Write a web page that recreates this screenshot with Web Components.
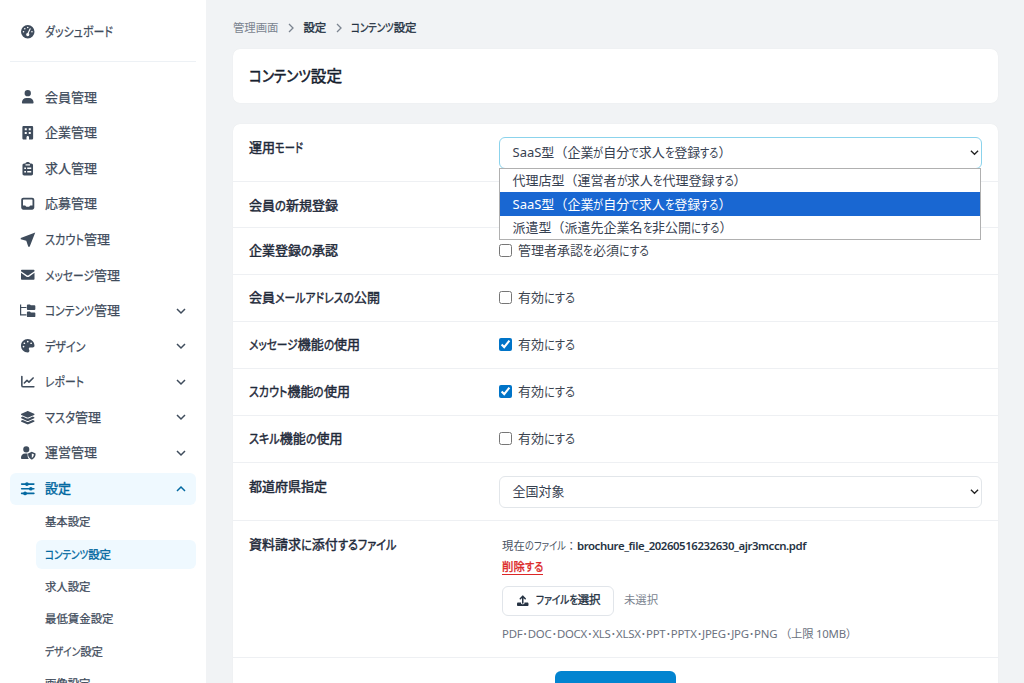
<!DOCTYPE html>
<html lang="ja">
<head>
<meta charset="utf-8">
<title>コンテンツ設定</title>
<style>
html, body { margin: 0; height: 100%; overflow: hidden; }
body {
  font-family: "Noto Sans", "Noto Sans CJK JP", sans-serif;
  font-size: 13px;
  color: #1f2937;
}
</style>
</head>
<body>
<admin-app></admin-app>

<script>
const icons = {
  gauge: '<path fill-rule="evenodd" d="M256 0a256 256 0 1 0 0 512 256 256 0 0 0 0-512zM256 64a30 30 0 1 1 0 60 30 30 0 0 1 0-60zM144 112a30 30 0 1 1 0 60 30 30 0 0 1 0-60zM96 226a30 30 0 1 1 0 60 30 30 0 0 1 0-60zM416 226a30 30 0 1 1 0 60 30 30 0 0 1 0-60zM354 122c14 6 20 20 14 34l-76 158c16 13 25 28 25 49a61 61 0 1 1-68-61l75-163c5-15 17-23 30-17z"/>',
  user: '<path d="M256 240A120 120 0 1 0 256 0a120 120 0 0 0 0 240zM205 304C110 304 35 375 35 472c0 23 14 40 36 40h370c22 0 36-17 36-40 0-97-75-168-170-168z"/>',
  building: '<path fill-rule="evenodd" d="M104 0C72 0 52 21 52 48v416c0 27 20 48 52 48h104v-86c0-26 20-48 48-48s48 22 48 48v86h104c32 0 52-21 52-48V48c0-27-20-48-52-48zM142 84h76v74h-76zM294 84h76v74h-76zM142 226h76v74h-76zM294 226h76v74h-76z"/>',
  clipboard: '<path fill-rule="evenodd" d="M256 0c-42 0-77 22-90 54h-46c-35 0-64 29-64 64v330c0 35 29 64 64 64h272c35 0 64-29 64-64V118c0-35-29-64-64-64h-46C333 22 298 0 256 0zM172 90h168v40H172zM124 210h66v60h-66zM236 210h152v60H236zM124 340h66v60h-66zM236 340h152v60H236z"/>',
  inbox: '<path fill-rule="evenodd" d="M88 32C44 32 8 68 8 112v288c0 44 36 80 80 80h336c44 0 80-36 80-80V112c0-44-36-80-80-80zM96 92h320c11 0 20 9 20 20v208h-74c-18 0-25 12-35 30-7 13-12 18-25 18h-92c-13 0-18-5-25-18-10-18-17-30-35-30H76V112c0-11 9-20 20-20z"/>',
  send: '<path d="M540-20-10 190v48l210 52 76 232h52z"/>',
  mail: '<path d="M30 64h452c18 0 30 12 30 30v26L286 278c-18 13-42 13-60 0L0 120V94c0-18 12-30 30-30zM0 182l196 138c36 27 84 27 120 0l196-138v236c0 18-12 30-30 30H30c-18 0-30-12-30-30z"/>',
  tree: '<path d="M-38 16h46v94h198v46H8v230h198v46H-38zM258 16h82l34 34h136c20 0 34 14 34 34v110c0 20-14 34-34 34H258c-20 0-34-14-34-34V50c0-20 14-34 34-34zM258 284h82l34 34h136c20 0 34 14 34 34v110c0 20-14 34-34 34H258c-20 0-34-14-34-34V318c0-20 14-34 34-34z"/>',
  palette: '<path d="M512 256v2.700C511.600 295.200 478.400 320 441.900 320H344c-26.500 0-48 21.500-48 48 0 3.400.4 6.700 1 9.900 2.100 10.200 6.500 20 10.800 29.900 6.100 13.800 12.100 27.500 12.100 42 0 31.800-21.600 60.700-53.400 62-3.500.1-7 .2-10.600.2C114.600 512 0 397.400 0 256S114.600 0 256 0s256 114.600 256 256zM128 288a32 32 0 1 0-64 0 32 32 0 1 0 64 0zm0-96a32 32 0 1 0 0-64 32 32 0 1 0 0 64zM288 96a32 32 0 1 0-64 0 32 32 0 1 0 64 0zm96 96a32 32 0 1 0 0-64 32 32 0 1 0 0 64z" fill-rule="evenodd"/>',
  chart: '<path d="M32 54v340c0 35 17 54 54 54h402M126 304l102-102 74 66 158-156" fill="none" stroke="currentColor" stroke-width="60" stroke-linecap="round" stroke-linejoin="round"/>',
  layers: '<path transform="translate(-32)" d="M264.5 5.2c14.9-6.9 32.1-6.9 47 0l218.6 101c8.500 3.900 13.900 12.400 13.900 21.800s-5.400 17.900-13.900 21.800l-218.600 101c-14.900 6.900-32.100 6.900-47 0L45.900 149.800C37.400 145.800 32 137.300 32 128s5.400-17.900 13.900-21.800zM476.900 209.600l53.200 24.600c8.500 3.900 13.900 12.400 13.900 21.800s-5.400 17.900-13.900 21.800l-218.600 101c-14.900 6.900-32.100 6.900-47 0L45.900 277.800C37.400 273.800 32 265.300 32 256s5.400-17.900 13.900-21.800l53.200-24.600 152 70.200c23.400 10.800 50.400 10.800 73.800 0zM324.900 407.800l152-70.200 53.200 24.600c8.500 3.900 13.900 12.400 13.900 21.800s-5.400 17.900-13.900 21.800l-218.600 101c-14.900 6.900-32.100 6.900-47 0L45.900 405.800C37.400 401.800 32 393.300 32 384s5.400-17.900 13.900-21.800l53.200-24.600 152 70.200c23.400 10.800 50.400 10.800 73.800 0z"/>',
  shield: '<path fill-rule="evenodd" d="M200 244a116 116 0 1 0 0-232 116 116 0 0 0 0 232zM156 288C66 288 0 358 0 446c0 32 16 50 44 50h252c-32-42-46-90-46-150v-58zM410 222l126 50c12 5 18 13 18 26 0 92-34 166-130 212-9 4-19 4-28 0-96-46-130-120-130-212 0-13 6-21 18-26zM410 280v172c50-32 74-76 78-142z"/>',
  sliders: '<path d="M24 80h464M24 256h464M24 432h464" fill="none" stroke="currentColor" stroke-width="60" stroke-linecap="round"/><circle cx="224" cy="80" r="70"/><circle cx="372" cy="256" r="70"/><circle cx="154" cy="432" r="70"/>',
  upload: '<path d="M256 360V64M146 164 256 52l110 112" fill="none" stroke="currentColor" stroke-width="68" stroke-linecap="round" stroke-linejoin="round"/><path d="M52 336h128v28c0 66 152 66 152 0v-28h128c29 0 52 23 52 52v52c0 29-23 52-52 52H52c-29 0-52-23-52-52v-52c0-29 23-52 52-52z"/>'
}

class UiIcon extends HTMLElement {
  connectedCallback() {
    this.attachShadow({ mode: 'open' }).innerHTML = `
      <style>
        :host { display: block; width: 13.500px; height: 13.500px; flex: none; }
        svg { display: block; width: 100%; height: 100%; overflow: visible; fill: currentColor; }
      </style>
      <svg viewBox="0 0 512 512">${icons[this.getAttribute('name')]}</svg>`
  }
}

class UiChevron extends HTMLElement {
  connectedCallback() {
    const paths = { down: 'M1 3 5 7 9 3', up: 'M1 7 5 3 9 7', right: 'M3 1 7 5 3 9' }
    this.attachShadow({ mode: 'open' }).innerHTML = `
      <style>
        :host { display: block; width: 10px; height: 10px; flex: none; }
        svg { display: block; width: 100%; height: 100%; fill: none; stroke: currentColor; stroke-width: var(--stroke, 1.5); }
      </style>
      <svg viewBox="0 0 10 10"><path d="${paths[this.getAttribute('dir')]}"/></svg>`
  }
}

// Text with condensed kana: the kana runs are narrowed until the line
// is as wide as the "w" attribute. Without kana the letters are tracked.
class UiText extends HTMLElement {
  connectedCallback() {
    const text = this.getAttribute('text')
      .replace(/[（）：]/g, '<i>$&</i>')
      .replace(/[ぁ-ゖァ-ヺー]+/g, '<b>$&</b>')
    this.attachShadow({ mode: 'open' }).innerHTML = `
      <style>
        :host { display: block; white-space: nowrap; line-height: 20px; padding-bottom: var(--lift, 1px); flex: none; -webkit-text-stroke: var(--text-stroke, 0); }
        span { display: inline-block; font-feature-settings: "palt"; }
        i { font-style: normal; font-feature-settings: normal; }
        b { display: inline-block; font-weight: inherit; transform-origin: 0 50%; }
      </style>
      <span>${text}</span>`
    const width = Number(this.getAttribute('w'))
    const span = this.shadowRoot.querySelector('span')
    const runs = [...this.shadowRoot.querySelectorAll('b')]
    const natural = span.getBoundingClientRect().width
    if (runs.length) {
      const widths = runs.map(run => run.getBoundingClientRect().width)
      const kana = widths.reduce((a, b) => a + b, 0)
      const scale = (kana + width - natural) / kana
      runs.forEach((run, i) => {
        run.style.width = widths[i] * scale + 'px'
        run.style.transform = `scaleX(${scale})`
      })
    } else {
      span.style.letterSpacing = (width - natural) / span.textContent.length + 'px'
    }
    this.style.width = width + 'px'
  }
}

class NavItem extends HTMLElement {
  connectedCallback() {
    const chevron = this.hasAttribute('open') ? 'up' : 'down'
    this.attachShadow({ mode: 'open' }).innerHTML = `
      <style>
        :host {
          display: flex; align-items: center; box-sizing: border-box;
          height: 32px; margin-bottom: 3.580px; padding: 0 10.500px 0 10.700px;
          border-radius: 6px; color: #3f4c5c; --text-stroke: .25px;
        }
        :host([open]) { background: #eff9ff; color: #0369a1; --text-stroke: .45px; }
        ui-text { margin-left: 10.500px; }
        ui-chevron { margin-left: auto; }
      </style>
      <ui-icon name="${this.getAttribute('icon')}"></ui-icon>
      <ui-text text="${this.getAttribute('label')}" w="${this.getAttribute('w')}"></ui-text>
      ${this.hasAttribute('expandable') ? `<ui-chevron dir="${chevron}"></ui-chevron>` : ''}`
  }
}

class NavSub extends HTMLElement {
  connectedCallback() {
    this.attachShadow({ mode: 'open' }).innerHTML = `
      <style>
        :host {
          display: flex; align-items: center; height: 28.700px; margin: 0 0 3.600px 25.700px;
          padding-left: 9px; border-radius: 6px; font-size: 11.400px; color: #3f4c5c; --text-stroke: .25px; --lift: 0;
        }
        :host([active]) { background: #eff9ff; color: #0369a1; --text-stroke: .35px; }
      </style>
      <ui-text text="${this.getAttribute('label')}" w="${this.getAttribute('w')}"></ui-text>`
  }
}

class SideNav extends HTMLElement {
  connectedCallback() {
    this.attachShadow({ mode: 'open' }).innerHTML = `
      <style>
        :host { display: block; box-sizing: border-box; width: 206px; height: 100%; padding: 15.900px 9.700px 0 10.300px; background: #fff; overflow: hidden; flex: none; }
        hr { height: 1px; margin: 13.300px 0 19px; border: 0; background: #edf1f5; }
      </style>
      <nav-item icon="gauge" label="ダッシュボード" w="68"></nav-item>
      <hr>
      <nav-item icon="user" label="会員管理" w="52"></nav-item>
      <nav-item icon="building" label="企業管理" w="52"></nav-item>
      <nav-item icon="clipboard" label="求人管理" w="52"></nav-item>
      <nav-item icon="inbox" label="応募管理" w="52"></nav-item>
      <nav-item icon="send" label="スカウト管理" w="65"></nav-item>
      <nav-item icon="mail" label="メッセージ管理" w="75"></nav-item>
      <nav-item icon="tree" label="コンテンツ管理" w="75" expandable></nav-item>
      <nav-item icon="palette" label="デザイン" w="40.500" expandable></nav-item>
      <nav-item icon="chart" label="レポート" w="39" expandable></nav-item>
      <nav-item icon="layers" label="マスタ管理" w="56" expandable></nav-item>
      <nav-item icon="shield" label="運営管理" w="52" expandable></nav-item>
      <nav-item icon="sliders" label="設定" w="26" expandable open></nav-item>
      <nav-sub label="基本設定" w="45.500"></nav-sub>
      <nav-sub label="コンテンツ設定" w="66" active></nav-sub>
      <nav-sub label="求人設定" w="45.500"></nav-sub>
      <nav-sub label="最低賃金設定" w="68.500"></nav-sub>
      <nav-sub label="デザイン設定" w="58"></nav-sub>
      <nav-sub label="画像設定" w="45.500"></nav-sub>`
  }
}

class BreadCrumb extends HTMLElement {
  connectedCallback() {
    this.attachShadow({ mode: 'open' }).innerHTML = `
      <style>
        :host { display: flex; align-items: center; gap: 7.500px; height: 20px; font-size: 11.400px; color: #263343; --text-stroke: .35px; }
        .root { color: #7b8490; --text-stroke: 0; }
        ui-chevron { color: #7b8490; --stroke: 1.3; }
      </style>
      <ui-text class="root" text="管理画面" w="45.500"></ui-text>
      <ui-chevron dir="right"></ui-chevron>
      <ui-text text="設定" w="22.500"></ui-text>
      <ui-chevron dir="right"></ui-chevron>
      <ui-text text="コンテンツ設定" w="65.500"></ui-text>`
  }
}

class UiCard extends HTMLElement {
  connectedCallback() {
    this.attachShadow({ mode: 'open' }).innerHTML = `
      <style>
        :host { display: block; border-radius: 7px; background: #fff; box-shadow: 0 0 1px rgba(15, 23, 42, .08); }
      </style>
      <slot></slot>`
  }
}

class SettingRow extends HTMLElement {
  connectedCallback() {
    this.attachShadow({ mode: 'open' }).innerHTML = `
      <style>
        :host { display: grid; grid-template-columns: 250px 1fr; box-sizing: border-box; padding: 12.500px 16px; border-bottom: 1px solid #eef0f3; }
        .label { color: #1f2a3a; --text-stroke: .45px; }
      </style>
      <div class="label"><ui-text text="${this.getAttribute('label')}" w="${this.getAttribute('w')}"></ui-text></div>
      <div><slot></slot></div>`
  }
}

class UiCheck extends HTMLElement {
  connectedCallback() {
    this.attachShadow({ mode: 'open' }).innerHTML = `
      <style>
        :host { display: block; color: #3b4450; }
        label { display: flex; align-items: center; height: 20px; gap: 6px; }
        input { width: 13px; height: 13px; margin: 0; accent-color: #0074c8; }
      </style>
      <label>
        <input type="checkbox" ${this.hasAttribute('checked') ? 'checked' : ''}>
        <ui-text text="${this.getAttribute('label')}" w="${this.getAttribute('w')}"></ui-text>
      </label>`
  }
}

class UiSelect extends HTMLElement {
  connectedCallback() {
    this.attachShadow({ mode: 'open' }).innerHTML = `
      <style>
        :host { display: block; position: relative; color: #374151; }
        .box {
          display: flex; align-items: center; justify-content: space-between; box-sizing: border-box;
          height: 32px; padding: 0 2px 0 12.500px; border: 1px solid #e2e6ea; border-radius: 6px;
        }
        :host([focused]) .box { border-color: #8bd3ec; }
        ui-chevron { width: 9px; height: 9px; color: #222; --stroke: 1.4; }
      </style>
      <div class="box">
        <ui-text text="${this.getAttribute('value')}" w="${this.getAttribute('w')}"></ui-text>
        <ui-chevron dir="down"></ui-chevron>
      </div>
      <slot></slot>`
  }
}

class OptionList extends HTMLElement {
  connectedCallback() {
    this.attachShadow({ mode: 'open' }).innerHTML = `
      <style>
        :host { position: absolute; z-index: 2; top: 31px; left: 0; right: 1px; border: 1px solid #b0b0b0; background: #fff; }
      </style>
      <slot></slot>`
  }
}

class OptionItem extends HTMLElement {
  connectedCallback() {
    this.attachShadow({ mode: 'open' }).innerHTML = `
      <style>
        :host { display: flex; align-items: center; height: 23.600px; padding-left: 12.500px; }
        :host([selected]) { background: #1967d2; color: #fff; }
      </style>
      <ui-text text="${this.getAttribute('label')}" w="${this.getAttribute('w')}"></ui-text>`
  }
}

class FileField extends HTMLElement {
  connectedCallback() {
    this.attachShadow({ mode: 'open' }).innerHTML = `
      <style>
        :host { display: block; padding: 2px 0 0 3px; font-size: 11.400px; color: #4b5563; }
        .current { display: flex; height: 23.500px; }
        .name { font-weight: 600; color: #263343; }
        .delete { width: 41px; height: 15px; border-bottom: 1px solid #dc2626; color: #dc2626; --text-stroke: .35px; }
        .delete ui-text { line-height: 16px; height: 15px; }
        .picker { display: flex; align-items: center; gap: 10px; margin-top: 10.500px; color: #7b8490; }
        button {
          display: flex; align-items: center; box-sizing: border-box; width: 112px; height: 30px; padding: 0 0 0 14px;
          gap: 7px; border: 1px solid #e1e5ea; border-radius: 6px; background: #fff; font: inherit; color: #263343; --text-stroke: .35px;
        }
        button ui-icon { width: 11.500px; height: 11.500px; }
        .hint { margin-top: 8px; color: #6b7280; }
      </style>
      <div class="current">
        <ui-text text="現在のファイル：" w="75"></ui-text>
        <ui-text class="name" text="brochure_file_20260516232630_ajr3mccn.pdf" w="229"></ui-text>
      </div>
      <div class="delete"><ui-text text="削除する" w="41"></ui-text></div>
      <div class="picker">
        <button><ui-icon name="upload"></ui-icon><ui-text text="ファイルを選択" w="65"></ui-text></button>
        <ui-text text="未選択" w="34"></ui-text>
      </div>
      <div class="hint"><ui-text text="PDF･DOC･DOCX･XLS･XLSX･PPT･PPTX･JPEG･JPG･PNG （上限 10MB）" w="355"></ui-text></div>`
  }
}

class AdminApp extends HTMLElement {
  connectedCallback() {
    this.attachShadow({ mode: 'open' }).innerHTML = `
      <style>
        :host { display: flex; height: 683px; background: #f1f3f5; overflow: hidden; }
        main { flex: 1; min-width: 0; padding: 18px 26.500px 0 27px; }
        .title { display: flex; align-items: center; box-sizing: border-box; height: 54px; margin: 11.400px 0 20.800px; padding-left: 16px; font-size: 15.600px; color: #16202e; --text-stroke: .5px; --lift: 0; }
        .footer { display: flex; justify-content: center; padding-top: 13px; height: 60px; }
        .footer button { width: 121px; height: 36px; border: 0; border-radius: 6px; background: #0284d0; }
      </style>
      <side-nav></side-nav>
      <main>
        <bread-crumb></bread-crumb>
        <ui-card class="title"><ui-text text="コンテンツ設定" w="93"></ui-text></ui-card>
        <ui-card>
          <setting-row label="運用モード" w="54" style="height:58px"><ui-select focused value="SaaS型（企業が自分で求人を登録する）" w="219">
              <option-list>
                <option-item label="代理店型（運営者が求人を代理登録する）" w="234"></option-item>
                <option-item selected label="SaaS型（企業が自分で求人を登録する）" w="219"></option-item>
                <option-item label="派遣型（派遣先企業名を非公開にする）" w="220"></option-item>
              </option-list>
            </ui-select>
          </setting-row>
          <setting-row label="会員の新規登録" w="89" style="height:45.500px"></setting-row>
          <setting-row label="企業登録の承認" w="89" style="height:47px"><ui-check label="管理者承認を必須にする" w="131"></ui-check></setting-row>
          <setting-row label="会員メールアドレスの公開" w="131" style="height:47px"><ui-check label="有効にする" w="57"></ui-check></setting-row>
          <setting-row label="メッセージ機能の使用" w="111" style="height:47px"><ui-check checked label="有効にする" w="57"></ui-check></setting-row>
          <setting-row label="スカウト機能の使用" w="101" style="height:47px"><ui-check checked label="有効にする" w="57"></ui-check></setting-row>
          <setting-row label="スキル機能の使用" w="93.500" style="height:47px"><ui-check label="有効にする" w="57"></ui-check></setting-row>
          <setting-row label="都道府県指定" w="78" style="height:58.500px;padding-top:13.200px"><ui-select value="全国対象" w="52"></ui-select></setting-row>
          <setting-row label="資料請求に添付するファイル" w="147" style="height:137px"><file-field></file-field></setting-row>
          <div class="footer"><button type="submit" aria-label="保存"></button></div>
        </ui-card>
      </main>`
  }
}

customElements.define('ui-icon', UiIcon)
customElements.define('ui-chevron', UiChevron)
customElements.define('ui-text', UiText)
customElements.define('nav-item', NavItem)
customElements.define('nav-sub', NavSub)
customElements.define('side-nav', SideNav)
customElements.define('bread-crumb', BreadCrumb)
customElements.define('ui-card', UiCard)
customElements.define('setting-row', SettingRow)
customElements.define('ui-check', UiCheck)
customElements.define('ui-select', UiSelect)
customElements.define('option-list', OptionList)
customElements.define('option-item', OptionItem)
customElements.define('file-field', FileField)
customElements.define('admin-app', AdminApp)
</script>
</body>
</html>
